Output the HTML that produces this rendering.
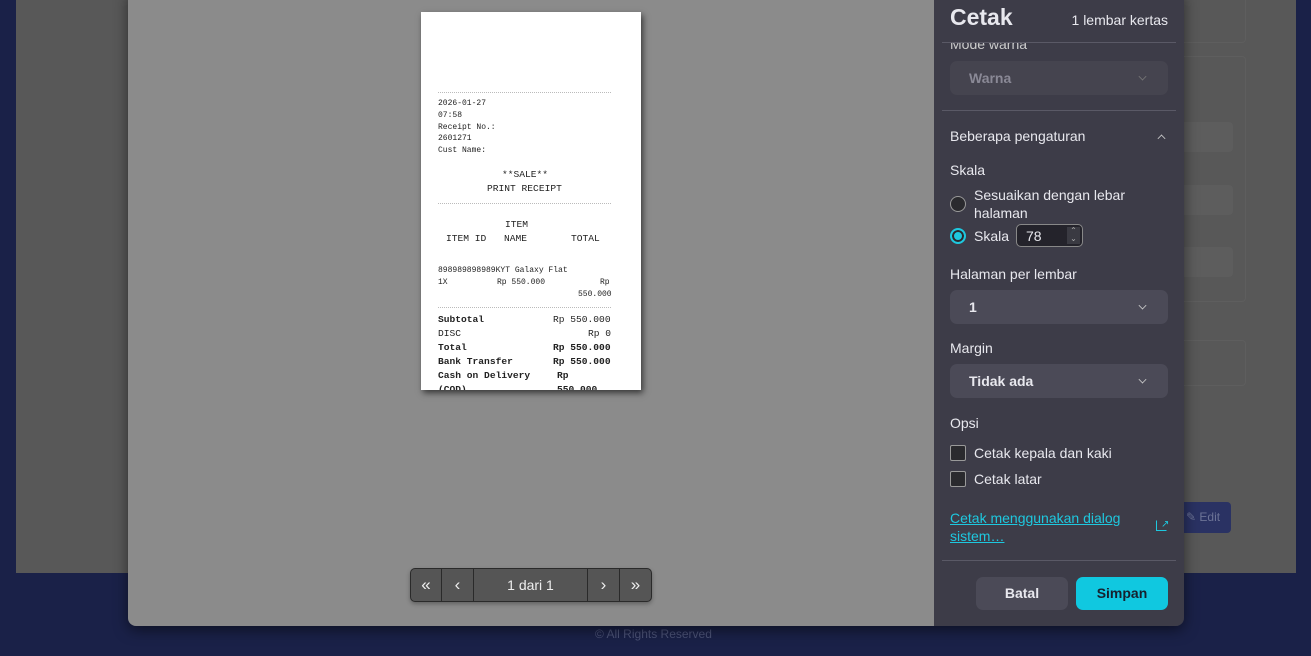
<!DOCTYPE html>
<html><head><meta charset="utf-8"><style>
*{box-sizing:border-box;margin:0;padding:0}
body{width:1311px;height:656px;overflow:hidden;background:#1a2148;font-family:"Liberation Sans",sans-serif;position:relative}
.page{position:absolute;left:16px;top:0;width:1280px;height:573px;background:#585858}
.abs{position:absolute}
.dlg{position:absolute;left:128px;top:-10px;width:1056px;height:636px;border-radius:8px;overflow:hidden;box-shadow:0 4px 14px rgba(0,0,0,.5)}
.prev{position:absolute;left:0;top:0;width:806px;height:636px;background:#8b8b8b}
.side{position:absolute;left:806px;top:0;width:250px;height:636px;background:#3d3c48;color:#e8e8ee}
.paper{position:absolute;left:293px;top:22px;width:220px;height:378px;background:#fff;box-shadow:2px 3px 6px rgba(0,0,0,.6);font-family:"Liberation Mono",monospace;font-size:8px;color:#222;overflow:hidden}
.paper div{position:absolute;white-space:pre}
.m{font-size:9.6px;left:17px}
.dots{position:absolute;left:17px;width:173px;border-top:1px dotted #bbb}
.sel{position:absolute;left:16px;width:218px;height:34px;border-radius:7px;background:#4b4a57;font-size:14px;font-weight:bold;padding:9px 19px}
.chev{position:absolute;right:22px;top:12px;width:7px;height:7px;border-right:1.5px solid #ccc;border-bottom:1.5px solid #ccc;transform:rotate(45deg) scale(.8)}
.lbl{position:absolute;left:16px;font-size:14px}
.hr{position:absolute;left:8px;width:234px;border-top:1px solid #5a5966}
.cb{position:absolute;left:16px;width:16px;height:16px;border:1px solid #999;border-radius:2px;background:#2a2a2e}
</style></head><body>
<div class="page">
 <div class="abs" style="left:1104px;top:-10px;width:126px;height:53px;border:1px solid #5e5e5e;border-radius:4px"></div>
 <div class="abs" style="left:1150px;top:56px;width:80px;height:246px;border:1px solid #5e5e5e;border-radius:4px"></div>
 <div class="abs" style="left:1150px;top:122px;width:67px;height:30px;background:#5d5d5d;border-radius:4px"></div>
 <div class="abs" style="left:1150px;top:185px;width:67px;height:30px;background:#5d5d5d;border-radius:4px"></div>
 <div class="abs" style="left:1150px;top:247px;width:67px;height:30px;background:#5d5d5d;border-radius:4px"></div>
 <div class="abs" style="left:1150px;top:340px;width:80px;height:46px;border:1px solid #5e5e5e;border-radius:4px"></div>
 <div class="abs" style="left:1160px;top:502px;width:55px;height:31px;background:#2a3263;border-radius:4px;color:#6c7396;font-size:12px;padding:8px 0 0 10px">✎ Edit</div>
</div>
<div class="abs" style="left:595px;top:627px;color:#4c5377;font-size:12px">© All Rights Reserved</div>
<div class="dlg">
 <div class="prev">
  <div class="paper">
   <div class="dots" style="top:80px"></div>
   <div style="left:17px;top:86px;line-height:11.8px">2026-01-27
07:58
Receipt No.:
2601271
Cust Name:</div>
   <div class="m" style="left:81px;top:157px">**SALE**</div>
   <div class="m" style="left:66px;top:171px">PRINT RECEIPT</div>
   <div class="dots" style="top:191px"></div>
   <div class="m" style="left:84px;top:207px">ITEM</div>
   <div class="m" style="left:25px;top:221px">ITEM ID</div>
   <div class="m" style="left:83px;top:221px">NAME</div>
   <div class="m" style="left:150px;top:221px">TOTAL</div>
   <div style="left:17px;top:254px">898989898989KYT Galaxy Flat</div>
   <div style="left:17px;top:266px">1X</div>
   <div style="left:76px;top:266px">Rp 550.000</div>
   <div style="left:179px;top:266px">Rp</div>
   <div style="left:157px;top:278px">550.000</div>
   <div class="dots" style="top:295px"></div>
   <div class="m" style="top:302px;font-weight:bold">Subtotal</div><div class="m" style="left:132px;top:302px">Rp 550.000</div>
   <div class="m" style="top:316px">DISC</div><div class="m" style="left:167px;top:316px">Rp 0</div>
   <div class="m" style="top:330px;font-weight:bold">Total</div><div class="m" style="left:132px;top:330px;font-weight:bold">Rp 550.000</div>
   <div class="m" style="top:344px;font-weight:bold">Bank Transfer</div><div class="m" style="left:132px;top:344px;font-weight:bold">Rp 550.000</div>
   <div class="m" style="top:358px;font-weight:bold">Cash on Delivery</div><div class="m" style="left:136px;top:358px;font-weight:bold">Rp</div>
   <div class="m" style="top:372px;font-weight:bold">(COD)</div><div class="m" style="left:136px;top:372px;font-weight:bold">550.000</div>
  </div>
  <div class="abs" style="left:282px;top:578px;width:242px;height:34px;background:#555;border:1px solid #2a2a2a;border-radius:5px;box-shadow:0 2px 4px rgba(0,0,0,.3);color:#eee;font-size:14px">
   <div class="abs" style="left:0;width:31px;height:32px;border-right:1px solid #2a2a2a;text-align:center;line-height:31px;font-size:17px">«</div>
   <div class="abs" style="left:31px;width:32px;height:32px;border-right:1px solid #2a2a2a;text-align:center;line-height:31px;font-size:17px">‹</div>
   <div class="abs" style="left:63px;width:114px;height:32px;border-right:1px solid #2a2a2a;text-align:center;line-height:32px">1 dari 1</div>
   <div class="abs" style="left:177px;width:32px;height:32px;border-right:1px solid #2a2a2a;text-align:center;line-height:31px;font-size:17px">›</div>
   <div class="abs" style="left:209px;width:31px;height:32px;text-align:center;line-height:31px;font-size:17px">»</div>
  </div>
 </div>
 <div class="side">
  <div class="lbl" style="top:46px;color:#ccc">Mode warna</div>
  <div class="abs" style="left:0;top:0;width:250px;height:52px;background:#3d3c48;z-index:1"></div>
  <div class="abs" style="left:16px;top:14px;font-size:23px;font-weight:bold;z-index:2">Cetak</div>
  <div class="abs" style="right:16px;top:22px;font-size:14px;z-index:2">1 lembar kertas</div>
  <div class="hr" style="top:52px;z-index:2"></div>
  <div class="sel" style="top:71px;background:#45444f;color:#8a8996;font-weight:bold">Warna<div class="chev" style="border-color:#777"></div></div>
  <div class="hr" style="top:120px"></div>
  <div class="lbl" style="top:138px">Beberapa pengaturan</div>
  <div class="abs" style="left:224px;top:145px;width:7px;height:7px;border-left:1.5px solid #ccc;border-top:1.5px solid #ccc;transform:rotate(45deg) scale(.8)"></div>
  <div class="lbl" style="top:172px">Skala</div>
  <div class="abs" style="left:16px;top:206px;width:16px;height:16px;border-radius:50%;border:1px solid #999;background:#2a2a2e"></div>
  <div class="abs" style="left:40px;top:196px;font-size:14px;line-height:18px">Sesuaikan dengan lebar<br>halaman</div>
  <div class="abs" style="left:16px;top:238px;width:16px;height:16px;border-radius:50%;border:2px solid #1ec8df;background:#1ec8df;box-shadow:inset 0 0 0 2px #2a2a2e"></div>
  <div class="abs" style="left:40px;top:238px;font-size:14px">Skala</div>
  <div class="abs" style="left:82px;top:234px;width:67px;height:23px;border:1px solid #888;border-radius:5px;background:#24232b;font-size:14px;padding:3px 0 0 9px">78<div class="abs" style="right:2px;top:2px;width:13px;height:17px;background:#3a3a42;font-size:8px;line-height:8px;text-align:center;color:#aaa">⌃<br>⌄</div></div>
  <div class="lbl" style="top:276px">Halaman per lembar</div>
  <div class="sel" style="top:300px">1<div class="chev"></div></div>
  <div class="lbl" style="top:350px">Margin</div>
  <div class="sel" style="top:374px">Tidak ada<div class="chev"></div></div>
  <div class="lbl" style="top:425px">Opsi</div>
  <div class="cb" style="top:455px"></div>
  <div class="abs" style="left:40px;top:455px;font-size:14px">Cetak kepala dan kaki</div>
  <div class="cb" style="top:481px"></div>
  <div class="abs" style="left:40px;top:481px;font-size:14px">Cetak latar</div>
  <div class="abs" style="left:16px;top:519px;font-size:14px;line-height:18px;color:#1ec8df;text-decoration:underline">Cetak menggunakan dialog<br>sistem…</div>
  <div class="abs" style="left:222px;top:530px;width:11px;height:11px;border:1.5px solid #1ec8df;border-top-color:transparent;border-right-color:transparent"></div>
  <div class="abs" style="left:227px;top:529px;color:#1ec8df;font-size:10px">↗</div>
  <div class="hr" style="top:570px"></div>
  <div class="abs" style="left:42px;top:587px;width:92px;height:33px;border-radius:7px;background:#4b4a57;text-align:center;line-height:33px;font-size:14px;font-weight:bold">Batal</div>
  <div class="abs" style="left:142px;top:587px;width:92px;height:33px;border-radius:7px;background:#10c8e0;color:#16212e;text-align:center;line-height:33px;font-size:14px;font-weight:bold">Simpan</div>
 </div>
</div>
</body></html>
